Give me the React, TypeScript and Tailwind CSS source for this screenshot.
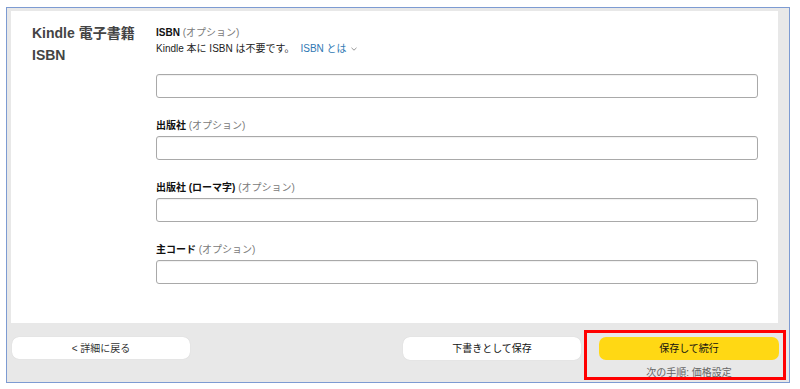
import React from "react";

const font = { fontFamily: '"Liberation Sans", "Noto Sans CJK JP", sans-serif' };

function Field({ label }: { label: string }) {
  return (
    <div className="flex flex-col">
      <div className="h-[16px] leading-[16px] text-[10px] text-[#111]">
        <span className="font-bold">{label}</span>
        <span className="text-[#7a7a7a]"> (オプション)</span>
      </div>
      <div className="mt-[2px] h-[24px] w-[602px] rounded-[3px] border border-[#a9a9a9] bg-white shadow-[inset_0_1px_1px_rgba(0,0,0,0.06)]" />
    </div>
  );
}

export default function App() {
  return (
    <div className="w-[800px] h-[389px] bg-white pt-[7px] pl-[6px]" style={font}>
      <div className="w-[784px] h-[376px] border border-[#7d9bd2] bg-[#e8e8e8] flex flex-col">
        <div className="ml-[4px] mt-[3px] w-[767px] h-[312px] bg-white flex pl-[21px] pt-[11px]">
          <div className="w-[124px] text-[14px] leading-[22px] font-bold text-[#444]">
            <div>Kindle 電子書籍</div>
            <div>ISBN</div>
          </div>
          <div className="flex flex-col pt-[3px]">
            <div className="h-[16px] leading-[16px] text-[10px] text-[#111]">
              <span className="font-bold">ISBN</span>
              <span className="text-[#7a7a7a]"> (オプション)</span>
            </div>
            <div className="h-[16px] leading-[16px] text-[10px] text-[#222] flex items-center">
              <span>Kindle 本に ISBN は不要です。</span>
              <span className="ml-[6px] text-[#2f78b3]">ISBN とは</span>
              <svg className="ml-[4px]" width="6" height="4" viewBox="0 0 6 4">
                <path d="M0.5 0.8 L3 3.2 L5.5 0.8" stroke="#8a8a8a" strokeWidth="0.9" fill="none" />
              </svg>
            </div>
            <div className="mt-[17px] h-[24px] w-[602px] rounded-[3px] border border-[#a9a9a9] bg-white shadow-[inset_0_1px_1px_rgba(0,0,0,0.06)]" />
            <div className="mt-[20px] flex flex-col gap-[20px]">
              <Field label="出版社" />
              <Field label="出版社 (ローマ字)" />
              <Field label="主コード" />
            </div>
          </div>
        </div>
        <div className="flex items-start pl-[5px] pr-[3px]">
          <div className="mt-[14px] w-[178px] h-[22px] rounded-[7px] bg-white flex items-center justify-center text-[10px] text-[#333] shadow-[0_0_1px_rgba(0,0,0,0.15)]">
            &lt; 詳細に戻る
          </div>
          <div className="flex-1" />
          <div className="mt-[14px] w-[178px] h-[23px] rounded-[7px] bg-white flex items-center justify-center text-[10px] text-[#111] shadow-[0_0_1px_rgba(0,0,0,0.15)]">
            下書きとして保存
          </div>
          <div className="ml-[3px] mt-[7px] w-[202px] h-[50px] border-[3px] border-[#ff0000] overflow-hidden pl-[12px] pr-[4px] pt-[4px]">
            <div className="w-[180px] h-[23px] rounded-[7px] bg-[#ffd814] flex items-center justify-center text-[10px] text-[#111]">
              保存して続行
            </div>
            <div className="mt-[5px] w-[180px] text-center text-[10px] leading-[16px] text-[#666]">
              次の手順: 価格設定
            </div>
          </div>
        </div>
      </div>
    </div>
  );
}
